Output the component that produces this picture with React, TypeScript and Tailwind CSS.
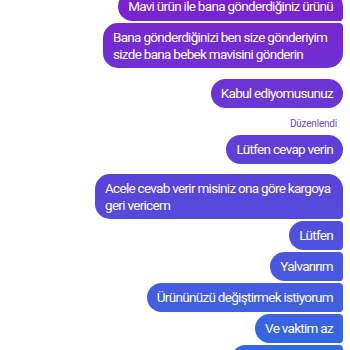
type Shape = "single" | "first" | "middle" | "last";

type Message = {
  id: number;
  lines: string[];
  shape: Shape;
  width?: string;
  spacing?: string;
};

const topMessages: Message[] = [
  { id: 1, lines: ["Mavi ürün ile bana gönderdiğiniz ürünü"], shape: "first", spacing: "-mt-[8px]" },
  {
    id: 2,
    lines: ["Bana gönderdiğinizi ben size gönderiyim", "sizde bana bebek mavisini gönderin"],
    shape: "last",
    width: "w-[240px]",
    spacing: "mt-[2px]",
  },
  { id: 3, lines: ["Kabul ediyomusunuz"], shape: "single", spacing: "mt-[11px]" },
];

const bottomMessages: Message[] = [
  {
    id: 5,
    lines: ["Acele cevab verir misiniz ona göre kargoya", "geri vericem"],
    shape: "first",
    width: "w-[248px]",
    spacing: "mt-[10px]",
  },
  { id: 6, lines: ["Lütfen"], shape: "middle", spacing: "mt-[2px]" },
  { id: 7, lines: ["Yalvarırım"], shape: "middle", spacing: "mt-[2px]" },
  { id: 8, lines: ["Ürününüzü değiştirmek istiyorum"], shape: "middle", spacing: "mt-[2px]" },
  { id: 9, lines: ["Ve vaktim az"], shape: "middle", spacing: "mt-[2px]" },
];

function cornerClass(shape: Shape) {
  if (shape === "first") return "rounded-l-[15px] rounded-tr-[15px] rounded-br-[4px]";
  if (shape === "middle") return "rounded-l-[15px] rounded-r-[4px]";
  if (shape === "last") return "rounded-l-[15px] rounded-tr-[4px] rounded-br-[15px]";
  return "rounded-[15px]";
}

// gradient is fixed to the viewport, so each bubble shows its slice of it
const bubbleFill = "bg-fixed bg-linear-to-b from-[#7b20cf] via-[#5a42d9] to-[#3168e3]";

function Bubble({ message }: { message: Message }) {
  const twoLines = message.lines.length > 1;
  return (
    <div
      className={`${message.spacing ?? ""} ${message.width ?? "w-fit"} ${cornerClass(
        message.shape
      )} ${bubbleFill} px-[10px] ${twoLines ? "py-[5.5px]" : "py-[6px]"} text-[13.5px] leading-[17px] tracking-[-0.7px] whitespace-nowrap text-white`}
    >
      {message.lines.map((line) => (
        <div key={line}>{line}</div>
      ))}
    </div>
  );
}

export default function App() {
  return (
    <div className="h-[350px] w-[350px] overflow-hidden bg-white font-['Roboto',sans-serif]">
      <div className="flex flex-col items-end pr-[7px]">
        {topMessages.map((message) => (
          <Bubble key={message.id} message={message} />
        ))}

        <div className="mt-[10px] mr-[6px] text-[10px] leading-[12px] tracking-[-0.2px] text-[#5b4dd3]">
          Düzenlendi
        </div>
        <Bubble
          message={{ id: 4, lines: ["Lütfen cevap verin"], shape: "single", spacing: "mt-[5px]" }}
        />

        {bottomMessages.map((message) => (
          <Bubble key={message.id} message={message} />
        ))}

        {/* next bubble, only its top edge is in view */}
        <div
          className={`mt-[2px] h-[29px] w-[112px] rounded-l-[15px] rounded-r-[4px] ${bubbleFill}`}
        />
      </div>
    </div>
  );
}
